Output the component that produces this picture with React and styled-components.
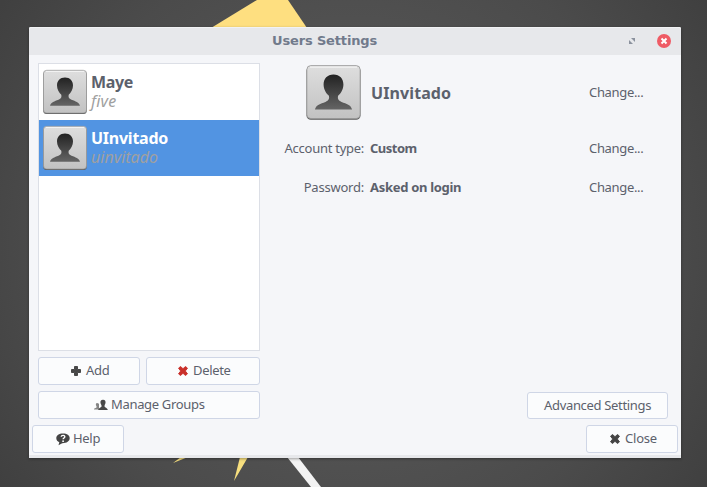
import React from 'react';
import styled, { createGlobalStyle } from 'styled-components';

const GlobalStyle = createGlobalStyle`
  * { box-sizing: border-box; }
  body { margin: 0; background: #444; }
`;

const Desktop = styled.div`
  position: relative;
  width: 707px;
  height: 487px;
  overflow: hidden;
  padding: 27px 26px 29px 29px;
  background: radial-gradient(ellipse 430px 420px at 50% 50%, #515151 50%, #4b4b4b 72%, #404040 100%);
  font: 13px/18px 'Noto Sans', 'Open Sans', sans-serif;
  color: #5c616c;
`;

const Wallpaper = styled.svg`
  position: absolute;
  inset: 0;
`;

const Window = styled.main`
  position: relative;
  width: 652px;
  height: 431px;
  display: flex;
  flex-direction: column;
  border-radius: 2px 2px 0 0;
  background: #f5f6f9;
  border-bottom: 3px solid #e7e8eb;
  box-shadow: 0 1px 3px rgba(0, 0, 0, 0.35);
`;

const TitleBar = styled.header`
  height: 28px;
  flex: none;
  display: grid;
  grid-template-columns: 1fr auto;
  align-items: center;
  padding: 0 9px 0 243px;
  border-radius: 2px 2px 0 0;
  background: #e7e8eb;
  box-shadow: inset 0 1px #f1f2f4;
`;

const Title = styled.h1`
  margin: 0;
  font: bold 13px/20px 'DejaVu Sans', sans-serif;
  letter-spacing: -0.15px;
  color: #717a8b;
`;

const Controls = styled.div`
  display: flex;
  align-items: center;
  gap: 20px;
  svg { display: block; }
`;

const Content = styled.div`
  display: grid;
  grid-template-columns: 222px 1fr;
  column-gap: 16px;
  padding: 8px 13px 0 9px;
  height: 364px;
`;

const Sidebar = styled.section`
  display: flex;
  flex-direction: column;
  gap: 6px;
`;

const UserList = styled.div`
  height: 288px;
  background: #fff;
  border: 1px solid #dcdfe6;
`;

const UserRow = styled.div`
  display: flex;
  height: 56px;
  padding: 5px 4px;
  gap: 4px;
  color: ${(p) => (p.$selected ? '#fff' : '#5c616c')};
  background: ${(p) => (p.$selected ? '#5294e2' : 'transparent')};
`;

const UserText = styled.div`
  display: flex;
  flex-direction: column;
  padding-top: 4px;
`;

const Label = styled.span`
  display: block;
  white-space: pre;
  font-size: ${(p) => p.$size || 13}px;
  font-weight: ${(p) => (p.$bold ? 700 : 400)};
  font-style: ${(p) => (p.$italic ? 'italic' : 'normal')};
  letter-spacing: ${(p) => p.$spacing ?? -0.33}px;
  line-height: 19px;
  color: ${(p) => (p.$muted ? '#a0a0a0' : 'inherit')};
`;

const ButtonRow = styled.div`
  display: grid;
  grid-template-columns: 102px 114px;
  gap: 6px;
`;

const Button = styled.button`
  display: flex;
  align-items: center;
  width: ${(p) => (p.$width ? `${p.$width}px` : '100%')};
  height: ${(p) => p.$height || 28}px;
  padding: 0 0 1px ${(p) => p.$inset}px;
  gap: ${(p) => p.$gap || 3}px;
  font: inherit;
  color: #5c616c;
  background: #fbfcfd;
  border: 1px solid #cfd6e6;
  border-radius: 3px;
  svg { flex: none; display: block; }
`;

const Details = styled.section`
  display: flex;
  flex-direction: column;
`;

const DetailRow = styled.div`
  display: grid;
  grid-template-columns: 88px 1fr 79px;
  column-gap: 5px;
  align-items: center;
  height: ${(p) => p.$height}px;
  padding-bottom: ${(p) => p.$lift ?? 2}px;
`;

const Field = styled.div`
  display: flex;
  justify-content: flex-end;
  padding-right: ${(p) => p.$end || 0}px;
`;

const Value = styled.div`
  padding-left: ${(p) => p.$start || 1}px;
  padding-top: ${(p) => p.$drop || 0}px;
`;

const DetailFooter = styled.div`
  margin-top: auto;
  display: flex;
  justify-content: flex-end;
`;

const ActionBar = styled.footer`
  display: flex;
  justify-content: space-between;
  padding: 6px 3px 0;
`;

function Avatar({ size }) {
  const id = `avatar-${React.useId().replace(/:/g, '')}`;
  return (
    <svg width={size} height={size + 2} viewBox="0 0 44 46">
      <defs>
        <linearGradient id={`${id}-a`} x1="0" y1="0" x2="0" y2="1">
          <stop offset="0" stopColor="#dedede" />
          <stop offset="1" stopColor="#c2c2c2" />
        </linearGradient>
        <linearGradient id={`${id}-b`} x1="0" y1="0" x2="0" y2="1">
          <stop offset="0" stopColor="#222" />
          <stop offset="1" stopColor="#646464" />
        </linearGradient>
      </defs>
      <rect x="0.2" y="2" width="43.6" height="43" rx="3.5" fill="#5a5a5a" />
      <rect x="0.5" y="1.3" width="43" height="42.700" rx="3.2" fill={`url(#${id}-a)`} stroke="#999" strokeWidth="0.7" />
      <path d="M3 2.500H41" stroke="#f2f2f2" strokeWidth="1" />
      <path
        d="M22 8.500C17 8.500 14 12 14 16.500C14 20.500 16 23.500 18.300 25.700C18.800 28 18.300 29.500 15.500 30.700C11.500 32.300 8 33 7 36.700H37C36 33 32.500 32.300 28.500 30.700C25.700 29.500 25.200 28 25.700 25.700C28 23.500 30 20.500 30 16.500C30 12 27 8.500 22 8.500Z"
        fill={`url(#${id}-b)`}
      />
    </svg>
  );
}

const PlusIcon = () => (
  <svg width="12" height="12" viewBox="0 0 12 12">
    <path d="M4.500 1.500H7.500V4.500H10.500V7.500H7.500V10.500H4.500V7.500H1.500V4.500H4.500Z" fill="#484848" stroke="#484848" strokeLinejoin="round" />
  </svg>
);

const CrossIcon = ({ color }) => (
  <svg width="12" height="12" viewBox="0 0 12 12">
    <path d="M3.500 1.500L6 3.700L8.500 1.500L10.500 3.200L8.300 6L10.500 8.800L8.500 10.500L6 8.300L3.500 10.500L1.500 8.800L3.700 6L1.500 3.200Z" fill={color} stroke={color} strokeWidth="0.900" strokeLinejoin="round" />
  </svg>
);

const GroupIcon = () => (
  <svg width="14" height="12" viewBox="0 0 14 12">
    <path d="M3.200 4C1.600 4 1.500 6 2.500 7.200V8.500L0 9.800V10.500H5V4.800Z" fill="#858585" />
    <path d="M9 0.800C6.800 0.800 6.200 2.300 6.500 4C6.700 5.200 7.600 6 7.600 7.200C7.400 8.600 4.500 8.600 4.200 11H13.800C13.500 8.600 10.600 8.600 10.500 7.200C10.500 6 11.300 5.200 11.500 4C11.800 2.300 11.200 0.800 9 0.800Z" fill="#484848" />
  </svg>
);

const HelpIcon = () => (
  <svg width="14" height="14" viewBox="0 0 14 14">
    <path d="M7 1.500C3 1.500 0.300 3.300 0.300 6.300C0.300 8.200 1.500 9.500 3.300 10.300L2.500 13.300L6.200 11.200C10.500 11.300 13.700 9.300 13.700 6.300C13.700 3.300 11 1.500 7 1.500Z" fill="#444" />
    <path d="M5.200 4.700C5.400 2.800 9 2.900 8.800 4.900C8.700 6.100 7.200 6 7.100 7.300" fill="none" stroke="#fff" strokeWidth="1.400" />
    <circle cx="7.100" cy="9.200" r="0.900" fill="#fff" />
  </svg>
);

const users = [
  { name: 'Maye', login: 'five', nameSpacing: -0.35, loginSpacing: 0.2 },
  { name: 'UInvitado', login: 'uinvitado', nameSpacing: -0.25, loginSpacing: 0 },
];

const Change = () => <Label>Change...</Label>;

export default function App() {
  return (
    <Desktop>
      <GlobalStyle />
      <Wallpaper width="707" height="487">
        <path d="M211 28L257 0H288L307 28Z" fill="#fedf80" />
        <path d="M181 457L173 463L188 457Z M240 457L234 481L248 457Z" fill="#f7df7e" />
        <path d="M287 457H298L321 487H311Z" fill="#f3f3f3" />
      </Wallpaper>
      <Window>
        <TitleBar>
          <Title>Users Settings</Title>
          <Controls>
            <svg width="8" height="8" viewBox="0 0 8 8">
              <path d="M3 1H7V5Z M1 3V7H5Z" fill="#8b919d" />
            </svg>
            <svg width="16" height="16" viewBox="0 0 16 16">
              <circle cx="8" cy="8" r="7" fill="#ef5b65" />
              <path d="M5.500 5.500L10.500 10.500M10.500 5.500L5.500 10.500" stroke="#fff" strokeWidth="2" />
            </svg>
          </Controls>
        </TitleBar>
        <Content>
          <Sidebar>
            <UserList>
              {users.map((u, i) => (
                <UserRow key={u.name} $selected={i === 1}>
                  <Avatar size={44} />
                  <UserText>
                    <Label $bold $size={16} $spacing={u.nameSpacing}>{u.name}</Label>
                    <Label $italic $muted $size={16} $spacing={u.loginSpacing}>{u.login}</Label>
                  </UserText>
                </UserRow>
              ))}
            </UserList>
            <ButtonRow>
              <Button $inset={31} $gap={4}><PlusIcon /><Label>Add</Label></Button>
              <Button $inset={30} $gap={4}><CrossIcon color="#c9302a" /><Label>Delete</Label></Button>
            </ButtonRow>
            <Button $inset={55}><GroupIcon /><Label>Manage Groups</Label></Button>
          </Sidebar>
          <Details>
            <DetailRow $height={60} $lift={1}>
              <Field $end={3}><Avatar size={55} /></Field>
              <Value $start={2} $drop={2}><Label $bold $size={16} $spacing={0.1}>UInvitado</Label></Value>
              <Change />
            </DetailRow>
            <DetailRow $height={52}>
              <Field><Label $spacing={-0.27}>Account type:</Label></Field>
              <Value><Label $bold $spacing={-0.5}>Custom</Label></Value>
              <Change />
            </DetailRow>
            <DetailRow $height={26}>
              <Field><Label $spacing={-0.22}>Password:</Label></Field>
              <Value><Label $bold $spacing={-0.3}>Asked on login</Label></Value>
              <Change />
            </DetailRow>
            <DetailFooter>
              <Button $width={141} $height={27} $inset={16}><Label>Advanced Settings</Label></Button>
            </DetailFooter>
          </Details>
        </Content>
        <ActionBar>
          <Button $width={92} $inset={23}><HelpIcon /><Label $spacing={-0.3}>Help</Label></Button>
          <Button $width={92} $inset={22} $gap={4}><CrossIcon color="#444" /><Label $spacing={-0.2}>Close</Label></Button>
        </ActionBar>
      </Window>
    </Desktop>
  );
}
